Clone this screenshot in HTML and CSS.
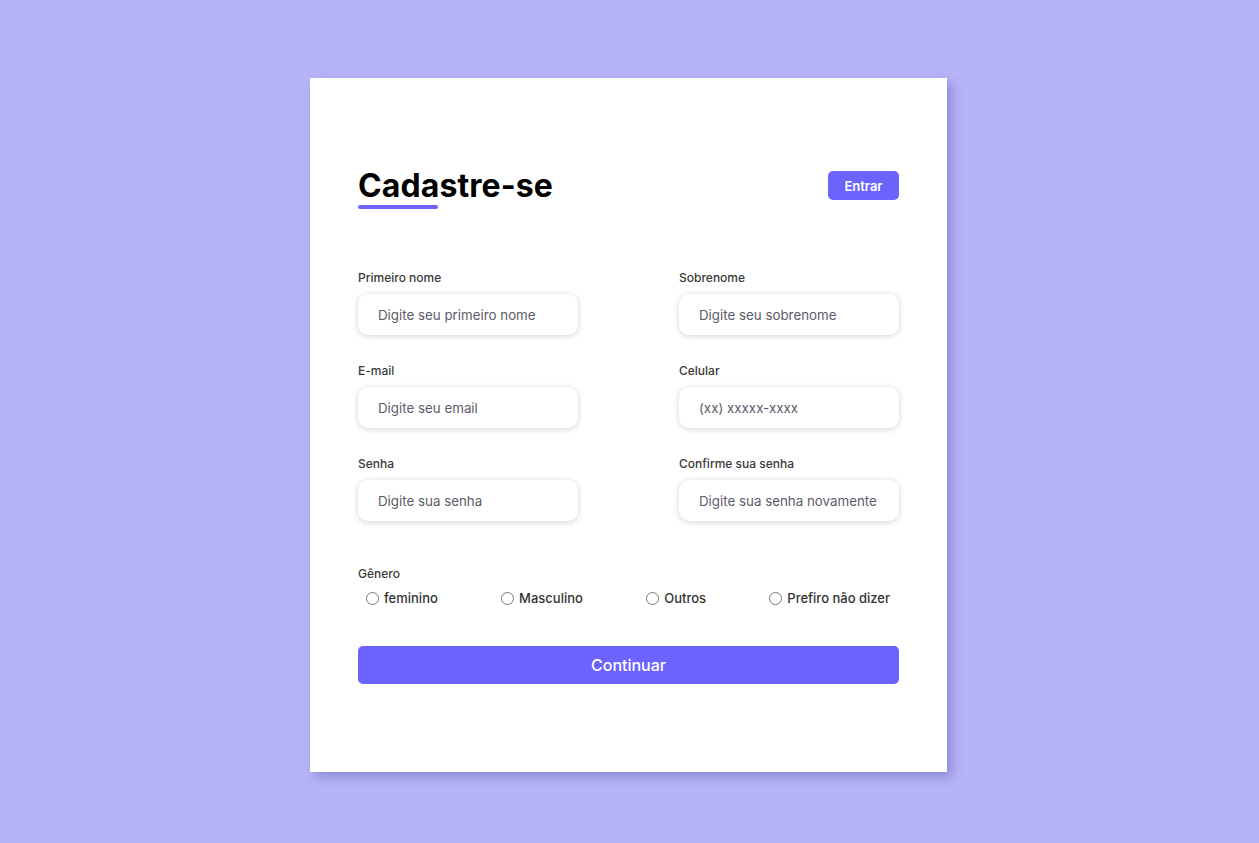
FILE: index.html
```html
<!DOCTYPE html>
<html lang="pt-BR">
<head>
<meta charset="utf-8">
<title>Cadastre-se</title>
<link rel="stylesheet" href="styles.css">
</head>
<body>
<main class="page">
  <form class="card">
    <header class="card-header">
      <div class="title-wrap">
        <h1 class="title">Cadastre-se</h1>
        <div class="title-bar"></div>
      </div>
      <button type="button" class="btn-login">Entrar</button>
    </header>

    <div class="fields">
      <div class="field">
        <label class="label">Primeiro nome</label>
        <input class="input" type="text" placeholder="Digite seu primeiro nome">
      </div>
      <div class="field">
        <label class="label">Sobrenome</label>
        <input class="input" type="text" placeholder="Digite seu sobrenome">
      </div>
      <div class="field">
        <label class="label">E-mail</label>
        <input class="input" type="email" placeholder="Digite seu email">
      </div>
      <div class="field">
        <label class="label">Celular</label>
        <input class="input" type="tel" placeholder="(xx) xxxxx-xxxx">
      </div>
      <div class="field">
        <label class="label">Senha</label>
        <input class="input" type="password" placeholder="Digite sua senha">
      </div>
      <div class="field">
        <label class="label">Confirme sua senha</label>
        <input class="input" type="password" placeholder="Digite sua senha novamente">
      </div>
    </div>

    <div class="gender">
      <div class="label">Gênero</div>
      <div class="radios">
        <label class="radio"><input type="radio" name="g"><span>feminino</span></label>
        <label class="radio"><input type="radio" name="g"><span>Masculino</span></label>
        <label class="radio"><input type="radio" name="g"><span>Outros</span></label>
        <label class="radio"><input type="radio" name="g"><span>Prefiro não dizer</span></label>
      </div>
    </div>

    <button type="button" class="btn-continue">Continuar</button>
  </form>
</main>
</body>
</html>
```

FILE: styles.css
```css
* { box-sizing: border-box; }
html, body { margin: 0; padding: 0; }
body {
  background: #b6b4f6;
  font-family: Inter, "Noto Sans", sans-serif;
  height: 843px;
}
.page {
  display: flex;
  justify-content: center;
  padding-top: 78px;
  padding-right: 2px;
}
.card {
  width: 637px;
  height: 694px;
  background: #fff;
  box-shadow: 5px 5px 10px rgba(70, 60, 160, 0.35);
  padding: 89px 48px 0 48px;
}
.card-header {
  display: flex;
  justify-content: space-between;
  align-items: flex-start;
}
.title {
  margin: 0;
  font-size: 32px;
  line-height: 38px;
  font-weight: 700;
  color: #000;
  letter-spacing: 0.1px;
}
.title-bar {
  width: 80px;
  height: 4px;
  background: #6c63ff;
  border-radius: 3px;
}
.btn-login {
  margin-top: 4px;
  width: 71px;
  height: 29px;
  border: none;
  border-radius: 5px;
  background: #6c63ff;
  color: #fff;
  font-family: inherit;
  font-size: 13px;
  font-weight: 600;
  cursor: pointer;
}
.fields {
  margin-top: 61px;
  display: grid;
  grid-template-columns: 220px 220px;
  justify-content: space-between;
  row-gap: 28px;
}
.field {
  display: flex;
  flex-direction: column;
}
.label {
  font-size: 12px;
  line-height: 15px;
  font-weight: 500;
  color: #3a3a3a;
  margin-bottom: 9px;
}
.input {
  height: 41px;
  width: 220px;
  border: none;
  border-radius: 10px;
  padding: 0 20px;
  font-family: inherit;
  font-size: 13.33px;
  color: #333;
  background: #fff;
  box-shadow: 0 1px 6px rgba(0, 0, 0, 0.18);
  outline: none;
}
.input::placeholder { color: #5c5c6a; }
.gender {
  margin-top: 45px;
}
.gender .label { margin-bottom: 9px; }
.radios {
  display: flex;
  justify-content: space-between;
  padding: 0 9px 0 8px;
}
.radio {
  display: flex;
  align-items: center;
  gap: 5px;
  font-size: 13px;
  font-weight: 500;
  color: #333;
}
.radio input {
  margin: 0;
  width: 13px;
  height: 13px;
}
.btn-continue {
  margin-top: 40px;
  width: 100%;
  height: 38px;
  border: none;
  border-radius: 5px;
  background: #6c63ff;
  color: #fff;
  font-family: inherit;
  font-size: 16px;
  font-weight: 500;
  cursor: pointer;
}
```
